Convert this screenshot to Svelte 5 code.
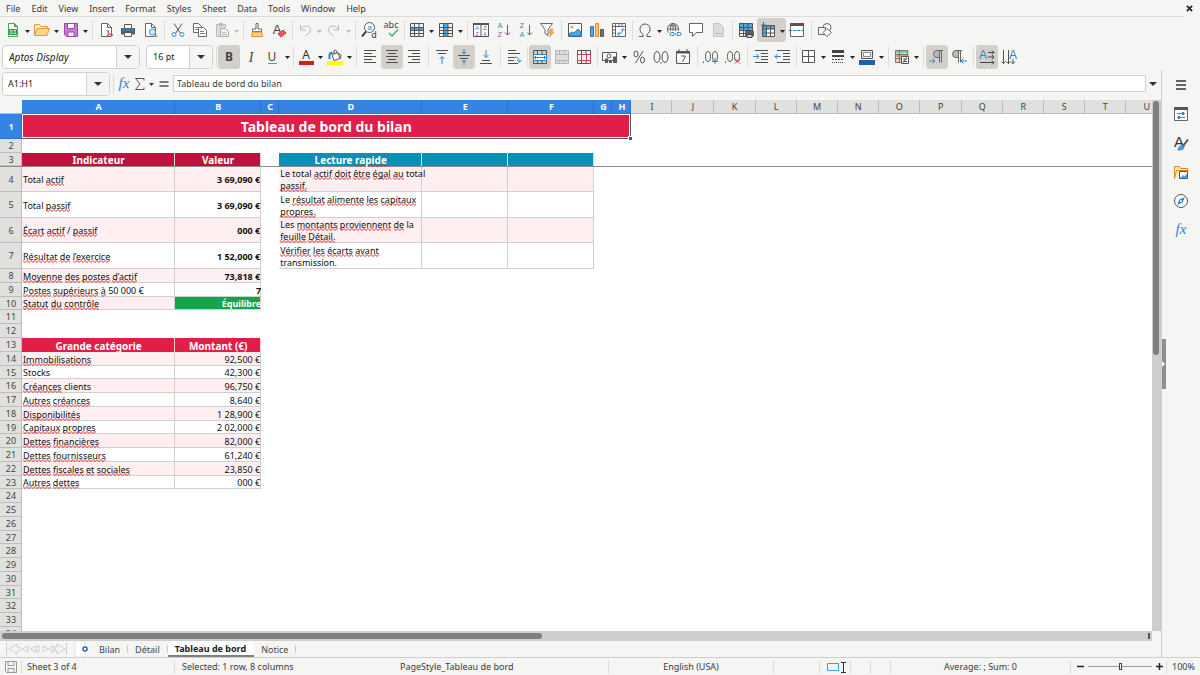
<script lang="ts">
  type Tool = { icon: string; label: string; menu?: boolean; on?: boolean; dim?: boolean };
  type Group = { tight?: boolean; tools: Tool[] };
  type Cell = { text?: string; kind?: string; span?: number };
  type Row = { n: number; height: number; cells: Cell[] };

  const menus = ['File', 'Edit', 'View', 'Insert', 'Format', 'Styles', 'Sheet', 'Data', 'Tools', 'Window', 'Help'];

  const page = '<path d="M3.5 1.5h6l4 4v9h-10z" fill="#fff" stroke="#666"/><path d="M9.5 1.5v4h4" fill="none" stroke="#666"/>';
  const grid = '<path d="M1.5 1.5h13v13h-13zM1.5 5.5h13M1.5 8.5h13M1.5 11.5h13M5.5 1.5v13M10 1.5v13" fill="none" stroke="#555"/>';
  const letter = (x: number, y: number, s: string, color: string, size = 7) =>
    `<text x="${x}" y="${y}" font-family="Liberation Sans" font-size="${size}" fill="${color}" text-anchor="middle">${s}</text>`;
  const downArrow = '<path d="M12.5 3v10M10 10.5l2.5 2.5 2.5-2.5" fill="none" stroke="#666"/>';
  const lines = (d: string) => `<path d="${d}" fill="none" stroke="#4d4d4d"/>`;
  const pilcrow = (x: number) =>
    `<path d="M${x + 4} 1.5H${x}a3 3 0 0 0 0 7h2z" fill="#bbb"/><path d="M${x + 6} 1.5H${x}a3 3 0 0 0 0 7h2M${x + 2}.5 1.5v12M${x + 4}.5 1.5v12" fill="none" stroke="#666"/>`;

  const icons: Record<string, string> = {
    new: '<path d="M3.5 1.5h6l3 3v10h-9z" fill="#fff" stroke="#43a45b"/><path d="M9.5 1.5v3h3z" fill="#43a45b" stroke="#43a45b"/><path d="M4.5 7.5h7v5h-7zM4.5 10h7M8 7.5v5" fill="#bfe5c8" stroke="#2d9a48"/>',
    open: '<path d="M.5 13.5v-11h5l1.5 2h6.5v2" fill="#fdebc8" stroke="#e39a3b"/><path d="M.5 13.5l2.5-7h12.5l-2.5 7z" fill="#fbd48b" stroke="#e39a3b"/>',
    save: '<path d="M1.5 1.5h13v13h-11l-2-2z" fill="#c77bd4" stroke="#9b45ad"/><path d="M4.5 1.5h7v5h-7z" fill="#fff" stroke="#9b45ad"/><path d="M5 10h6v4.5H5z" fill="#fff" stroke="#9b45ad"/>',
    pdf: page + '<path d="M8 15c3-3 3-5 2-7-1 3 2 5 5 5-3-1-5 0-7 2z" fill="#fbd3d3" stroke="#d64550"/>',
    print: '<path d="M4.5 6V2.5h7V6" fill="#fff" stroke="#555"/><path d="M1 6h14v6.5H1z" fill="#5b5f63"/><path d="M2 8h12" stroke="#3a8fc8"/><path d="M4.5 10.5h7v4h-7z" fill="#fff" stroke="#555"/>',
    preview: page + '<circle cx="10.5" cy="10" r="3" fill="#d6ebf8" stroke="#3f8fcb"/><path d="M12.5 12l3 3" stroke="#3f8fcb"/>',
    cut: '<path d="M4 1.5l6.5 10M12 1.5l-6.5 10" fill="none" stroke="#555"/><circle cx="4" cy="12.5" r="2" fill="none" stroke="#3f8fcb"/><circle cx="12" cy="12.5" r="2" fill="none" stroke="#3f8fcb"/>',
    copy: '<path d="M1.5 1.5h5l3 3v6h-8z" fill="#fff" stroke="#666"/><path d="M6.5 5.5h5l3 3v6h-8z" fill="#fff" stroke="#666"/><path d="M3 5.5h3M3 7.5h3M8 9.5h4M8 11.5h5" stroke="#3f8fcb"/>',
    paste: '<path d="M2.5 2.5h9v12h-9z" fill="#ddd" stroke="#bbb"/><path d="M5 1h4v3H5z" fill="#bbb"/><path d="M6.5 6.5h5l3 3v5h-8z" fill="#f2f2f2" stroke="#aaa"/><path d="M8 10.5h4M8 12.5h5" stroke="#bbb"/>',
    clone: '<path d="M7 1.5h2V7h3.5v2.5h-9V7H7z" fill="#fff" stroke="#666"/><path d="M3.5 10h9l1 4.5h-11z" fill="#fbd48b" stroke="#e08a2c"/>',
    clear: letter(6, 12, 'A', '#444', 13) + '<path d="M7 12l5-4 3 3-5 4z" fill="#ef5b62" stroke="#d33640"/>',
    undo: '<path d="M3.5 3v5h5M3.5 8c2-5 10-5.5 10 0 0 3-3 4-5 6" fill="none" stroke="#bbb"/>',
    redo: '<path d="M12.5 3v5h-5M12.5 8c-2-5-10-5.5-10 0 0 3 3 4 5 6" fill="none" stroke="#bbb"/>',
    find: '<circle cx="8.5" cy="5.5" r="5" fill="#fff" stroke="#555"/><path d="M1 14.5l4-5" stroke="#333" stroke-width="2"/>' + letter(8.5, 8, 'a', '#2d86c8', 8) + letter(13, 16, 'd', '#333', 9),
    spell: '<text x="8" y="6" font-family="Noto Sans" font-size="9" fill="#444" text-anchor="middle">abc</text><path d="M6 11l3 3 6-6.5" fill="none" stroke="#42b673" stroke-width="1.5"/>',
    row: '<rect x="1" y="5" width="14" height="4" fill="#4da6e4"/>' + grid,
    column: '<rect x="5" y="1" width="5" height="14" fill="#4da6e4"/>' + grid,
    sort: '<path d="M.5 1.5h15v13H.5zM8 1.5v13" fill="#fff" stroke="#555"/><path d="M0 2h16" stroke="#555" stroke-width="2"/>' + letter(4, 8, 'A', '#2d86c8', 6) + letter(4, 14, 'Z', '#a445b8', 5) + letter(12, 8, 'Z', '#a445b8', 6) + letter(12, 14, 'A', '#2d86c8', 5),
    asc: letter(5, 6, 'A', '#2d86c8') + letter(5, 15, 'Z', '#a445b8') + downArrow,
    desc: letter(5, 6, 'Z', '#a445b8') + letter(5, 15, 'A', '#2d86c8') + downArrow,
    filter: '<path d="M1.5 1.5h12L9 7.5v6l-3-2v-4z" fill="#fff" stroke="#666"/><path d="M11 7h3l-1 3h2l-4.5 5 1-4h-2z" fill="#f7a64a" stroke="#e08a2c" stroke-width=".5"/>',
    image: '<path d="M1.5 1.5h13v13h-13z" fill="#fff" stroke="#555"/><circle cx="5" cy="5" r="1.5" fill="#f5a623"/><path d="M2 14v-2l3-2 2 1 4-4 3 3v4z" fill="#4da6e4" stroke="#2d79b5"/>',
    chart: '<path d="M1.5 4.5h3v10h-3z" fill="#4da6e4" stroke="#2d79b5"/><path d="M6.5 1.5h3v13h-3z" fill="#fbc27d" stroke="#e08a2c"/><path d="M11.5 7.5h3v7h-3z" fill="#777" stroke="#555"/>',
    pivot: '<path d="M1.5 1.5h13v13h-13zM1.5 4.5h13M4.5 1.5v13M8 1.5v3M11 1.5v3M1.5 8h3M1.5 11h3" fill="#fff" stroke="#666"/><path d="M7 12c3 0 5-2 5-5M10 8.5l2-2 2 2M8.5 10L6.5 12l2 2" fill="none" stroke="#2d86c8"/>',
    omega: '<path d="M2 14.5h4v-2C1 9 2.5 2 8 2s7 7 2 10.5v2h4" fill="none" stroke="#555"/>',
    link: '<circle cx="7" cy="7" r="5.5" fill="#fff" stroke="#666"/><path d="M1.5 7h11M7 1.5v11M3 4h8M3 10h8" stroke="#666"/><ellipse cx="7" cy="7" rx="2.5" ry="5.5" fill="none" stroke="#666"/><rect x="3" y="9" width="13" height="6" fill="#f5f5f4"/><path d="M8 10.5H5.5a1.5 1.5 0 0 0 0 3H8M11 10.5h2.5a1.5 1.5 0 0 1 0 3H11M7 12h5" fill="none" stroke="#2d86c8"/>',
    comment: '<path d="M1.5 1.5h13v9H8l-3.5 4v-4h-3z" fill="#fff" stroke="#666"/>',
    headers: '<path d="M3.5 1.5h6l4 4v9h-10z" fill="#ddd" stroke="#c4c4c4"/><path d="M5 11.5h7" stroke="#bbb"/>',
    area: '<rect x="1" y="1" width="13" height="7" fill="#4da6e4"/>' + grid + '<rect x="7" y="9" width="9" height="5" fill="#5b5f63"/><path d="M9 12.5h5v3H9z" fill="#b8dcf5" stroke="#444"/>',
    freeze: '<path d="M2.5 3.5h12v11h-12z" fill="#fff"/><path d="M2 4h13v3H2zM2 4h4v11H2z" fill="#4da6e4"/><path d="M2.5 3.5h12v11h-12zM2.5 7h12M2.5 11h12M6.5 3.5v11M10.5 3.5v11" fill="none" stroke="#555"/><path d="M3.5 0v6M1 3h5" stroke="#1f74b8"/>',
    split: '<path d="M1.5 2.5h13v12h-13z" fill="#fff" stroke="#666"/><path d="M1 2.5h14" stroke="#555" stroke-width="3"/><path d="M0 8.5h16" stroke="#2d86c8" stroke-dasharray="3 1"/>',
    shapes: '<circle cx="10" cy="5.5" r="4" fill="#fff" stroke="#666"/><path d="M1.5 5.5h7v7h-7z" fill="#f5f5f4" stroke="#666"/><path d="M10 6.5l4.5 4-4.5 4-4-4z" fill="#fff" stroke="#666"/>',
    bold: '<text x="8" y="12" font-family="Noto Sans" font-size="12" font-weight="700" fill="#444" text-anchor="middle">B</text>',
    italic: '<text x="8" y="13" font-family="Liberation Serif" font-size="14" font-style="italic" fill="#444" text-anchor="middle">I</text>',
    underline: '<text x="7" y="12" font-family="Noto Sans" font-size="12" fill="#444" text-anchor="middle">U</text><path d="M3 14.5h9" stroke="#4d9ed8"/>',
    color: '<text x="8" y="10" font-family="Noto Sans" font-size="12" fill="#333" text-anchor="middle">A</text><rect x="1" y="12" width="15" height="4" fill="#c9211e"/>',
    highlight: '<path d="M5 5.5l6-2 2 6-6 2z" fill="#fff" stroke="#555"/><path d="M7 5V1.5c2-1 3 0 3 3M12 5c3 0 2 3 1 5" fill="none" stroke="#555"/><path d="M5.5 4c-4-1-3 4-3 6" fill="none" stroke="#2d86c8" stroke-width="2"/><rect x="0" y="12" width="16" height="4" fill="#ff0"/>',
    left: lines('M2 1.5h12M2 4.5h8M2 7.5h12M2 10.5h8M2 13.5h12'),
    center: lines('M2 1.5h12M4 4.5h8M2 7.5h12M4 10.5h8M2 13.5h12'),
    right: lines('M2 1.5h12M6 4.5h8M2 7.5h12M6 10.5h8M2 13.5h12'),
    top: lines('M2 1.5h12M4 4.5h8') + '<path d="M8 15V7.5M5.5 10L8 7.5l2.5 2.5" fill="none" stroke="#2d86c8"/>',
    middle: lines('M2 6.5h12M4 9.5h8') + '<path d="M8 0v5M6 3l2 2 2-2M8 16v-5M6 13l2-2 2 2" fill="none" stroke="#2d86c8"/>',
    bottom: lines('M4 11.5h8M2 14.5h12') + '<path d="M8 1v7.5M5.5 6L8 8.5l2.5-2.5" fill="none" stroke="#2d86c8"/>',
    wrap: lines('M2 1.5h8M2 4.5h12M2 8.5h6M2 11.5h6M2 14.5h10') + '<path d="M8 8.5c4-1 5 1 5.5 4M11 11l2.5 2.5 2-2.5" fill="none" stroke="#2d86c8"/>',
    mergecenter: grid + '<path d="M1.5 5.5h13v6h-13z" fill="#fff" stroke="#2d86c8"/><path d="M2 8.5h12M4 7L2.5 8.5 4 10M12 7l1.5 1.5L12 10" fill="none" stroke="#2d86c8"/>',
    merge: '<path d="M1.5 1.5h13v13h-13zM1.5 5.5h13M1.5 11.5h13M5.5 1.5v4M10.5 1.5v4M5.5 11.5v3M10.5 11.5v3" fill="#ddd" stroke="#b5b5b5"/>',
    unmerge: grid + '<path d="M1.5 5.5h13v6h-13zM5.5 5.5v6M10.5 5.5v6" fill="#fff" stroke="#d9414b"/>',
    currency: '<path d="M.5 3.5h14v8H.5z" fill="#fff" stroke="#555"/><circle cx="7" cy="7" r="2" fill="none" stroke="#555"/><path d="M3 9.5h3V14H3zM7 11h3v3H7zM11 7.5h4V14h-4z" fill="#5b5b5b"/>',
    percent: '<ellipse cx="5" cy="5" rx="2" ry="3" fill="none" stroke="#555"/><ellipse cx="11.5" cy="11" rx="2" ry="3" fill="none" stroke="#555"/><path d="M12 2L4.5 14" stroke="#555"/>',
    number: '<ellipse cx="4" cy="8" rx="3" ry="5.5" fill="none" stroke="#555"/><ellipse cx="12" cy="8" rx="3" ry="5.5" fill="none" stroke="#555"/><path d="M8 13v1.5" stroke="#555"/>',
    date: '<path d="M1.5 2.5h13v12h-13z" fill="#fff" stroke="#555"/><path d="M1 3.5h14" stroke="#555" stroke-width="2"/><path d="M4 0v3M12 0v3M6 7h4.5L7.5 13" fill="none" stroke="#555"/>',
    adddec: '<path d="M.5 12.5V14" stroke="#555"/><ellipse cx="5" cy="7.5" rx="2.5" ry="5" fill="none" stroke="#555"/><ellipse cx="12" cy="7.5" rx="2.5" ry="5" fill="none" stroke="#555"/><path d="M12 9v6M9 12.5h6" stroke="#2d86c8"/>',
    deldec: '<path d="M.5 12.5V14" stroke="#555"/><ellipse cx="5" cy="7.5" rx="2.5" ry="5" fill="none" stroke="#555"/><ellipse cx="12" cy="7.5" rx="2.5" ry="5" fill="none" stroke="#555"/><path d="M10 9.5l5 5M15 9.5l-5 5" stroke="#e0353f"/>',
    indent: lines('M2 1.5h13M8 4.5h7M8 7.5h7M8 10.5h7M2 13.5h13') + '<path d="M0 7.5h6M3.5 5L6 7.5 3.5 10" fill="none" stroke="#2d86c8"/>',
    outdent: lines('M2 1.5h13M8 4.5h7M8 7.5h7M8 10.5h7M2 13.5h13') + '<path d="M0 7.5h6M2.5 5L0 7.5 2.5 10" fill="none" stroke="#2d86c8"/>',
    borders: '<path d="M1.5 1.5h12v12h-12zM7.5 1.5v12M1.5 7.5h12" fill="#fff" stroke="#555"/>',
    border: '<path d="M2 2.5h12" stroke="#444" stroke-width="3"/><path d="M2 7h12" stroke="#444" stroke-width="2"/><path d="M2 10.5h12" stroke="#444" stroke-dasharray="2 1"/><path d="M2 13.5h12" stroke="#444" stroke-dasharray="1 1"/>',
    bordercolor: '<path d="M2.5 1.5h11v8h-11z" fill="#e8e8e8" stroke="#555"/><path d="M4.5 3.5h7v4h-7z" fill="#fff" stroke="#888"/><rect x="0" y="11" width="16" height="5" fill="#1e5fa8"/>',
    conditional: '<path d="M1.5 1.5h13v3h-13z" fill="#7fd19b"/><path d="M1.5 5h13v3h-13z" fill="#f08a80"/><path d="M1.5 8h6v6h-6z" fill="#fbd48b"/><path d="M1.5 1.5h12v12h-12zM1.5 5.5h12M1.5 9.5h12M5.5 1.5v12" fill="none" stroke="#777"/><path d="M7.5 7.5h7v7h-7z" fill="#fff" stroke="#555"/><path d="M9 10h4M9 12.5h4M12.5 8.5l-3 5" stroke="#555"/>',
    ltr: pilcrow(8) + '<path d="M0 12h6M3.5 9.5L6 12l-2.5 2.5" fill="none" stroke="#2d86c8"/>',
    rtl: pilcrow(5) + '<path d="M10 12h6M12.5 9.5L10 12l2.5 2.5" fill="none" stroke="#2d86c8"/>',
    horizontal: letter(4, 10, 'A', '#2d86c8', 12) + '<path d="M9 3.5h6M9 8h6M1 13.5h14M13 1.5l2 2-2 2M13 6l2 2-2 2M13 11.5l2 2-2 2" fill="none" stroke="#444"/>',
    vertical: letter(12, 10, 'A', '#2d86c8', 12) + '<path d="M2.5 1v14M7.5 1v14M.5 12.5l2 2 2-2M5.5 12.5l2 2 2-2M12 10v5M10 12.5l2 2 2-2" fill="none" stroke="#555"/>',
    hamburger: '<path d="M3 4h10M3 8h10M3 12h10" stroke="#333" stroke-width="1.5"/>',
    properties: '<path d="M1.5 2.5h13v12h-13z" fill="#fff" stroke="#666"/><path d="M1 2.5h14" stroke="#555" stroke-width="3"/><path d="M4 7.5h8M4 11.5h8" stroke="#777"/><path d="M10 6v3M6 10v3" stroke="#2d86c8" stroke-width="2"/>',
    styles: letter(6, 12, 'A', '#333', 15) + '<path d="M15 4.5l-4.5 6" stroke="#555" stroke-width="2"/><path d="M5 15c1-4 3-5 6-4 0 3-2 4-6 4z" fill="#4da6e4" stroke="#1f74b8"/>',
    gallery: '<path d="M1.5 14.5v-12h5l1 2h7v3" fill="#fdebc8" stroke="#e08a2c"/><path d="M1.5 14.5l2-8h12" fill="none" stroke="#e08a2c"/><path d="M6.5 7.5h8v7h-8z" fill="#fff" stroke="#555"/><path d="M7 14l3-3 1.5 1L14 10v4z" fill="#4da6e4"/>',
    navigator: '<circle cx="8" cy="8" r="6.5" fill="#fff" stroke="#555"/><path d="M12 4L9.5 9.5 4 12l2.5-5.5z" fill="#2d86c8"/><circle cx="8" cy="8" r="1" fill="#fff"/>',
    fx: '<text x="8" y="12" font-family="Liberation Serif" font-size="15" font-style="italic" fill="#2d86c8" text-anchor="middle">fx</text>',
    sigma: '<path d="M12 4.5v-2H3.5L8 8l-4.5 5.5H12v-2" fill="none" stroke="#555"/>',
    equals: '<path d="M4.5 6h9M4.5 10h9" stroke="#555" stroke-width="1.5"/>',
    disk: '<path d="M2.5 2.5h11v11h-10l-1-1zM5 2.5h6v4H5zM5 9.5h6v4H5z" fill="none" stroke="#999"/>',
    addsheet: '<path d="M1 0h10v16H1z" fill="#fff" stroke="#ccc" stroke-width=".5"/><circle cx="11" cy="8" r="2" fill="#fff" stroke="#2a63ad" stroke-width="1.5"/>',
    selection: '<path d="M.5 4.5h11v7H.5z" fill="none" stroke="#4a9bd1"/><path d="M14 3.5h5M14 13.5h5M16.5 3.5v10" stroke="#333"/>'
  };

  const standard: Group[] = [
    { tools: [{ icon: 'new', label: 'New', menu: true }, { icon: 'open', label: 'Open', menu: true }, { icon: 'save', label: 'Save', menu: true }] },
    { tools: [{ icon: 'pdf', label: 'Export as PDF' }, { icon: 'print', label: 'Print' }, { icon: 'preview', label: 'Print Preview' }] },
    { tools: [{ icon: 'cut', label: 'Cut' }, { icon: 'copy', label: 'Copy' }, { icon: 'paste', label: 'Paste', menu: true, dim: true }] },
    { tools: [{ icon: 'clone', label: 'Clone Formatting' }, { icon: 'clear', label: 'Clear Formatting' }] },
    { tight: true, tools: [{ icon: 'undo', label: 'Undo', menu: true, dim: true }, { icon: 'redo', label: 'Redo', menu: true, dim: true }] },
    { tools: [{ icon: 'find', label: 'Find and Replace' }, { icon: 'spell', label: 'Spelling' }] },
    { tight: true, tools: [{ icon: 'row', label: 'Row', menu: true }, { icon: 'column', label: 'Column', menu: true }] },
    { tools: [{ icon: 'sort', label: 'Sort' }, { icon: 'asc', label: 'Sort Ascending' }, { icon: 'desc', label: 'Sort Descending' }, { icon: 'filter', label: 'AutoFilter' }] },
    { tools: [{ icon: 'image', label: 'Insert Image' }, { icon: 'chart', label: 'Insert Chart' }, { icon: 'pivot', label: 'Pivot Table' }] },
    { tight: true, tools: [{ icon: 'omega', label: 'Special Character', menu: true }, { icon: 'link', label: 'Hyperlink' }, { icon: 'comment', label: 'Comment' }, { icon: 'headers', label: 'Headers and Footers', dim: true }] },
    { tools: [{ icon: 'area', label: 'Define Print Area' }, { icon: 'freeze', label: 'Freeze Rows and Columns', menu: true, on: true }, { icon: 'split', label: 'Split Window' }] },
    { tools: [{ icon: 'shapes', label: 'Draw Functions' }] }
  ];

  const formatting: Group[] = [
    { tools: [{ icon: 'bold', label: 'Bold', on: true }, { icon: 'italic', label: 'Italic' }, { icon: 'underline', label: 'Underline', menu: true }] },
    { tight: true, tools: [{ icon: 'color', label: 'Font Color', menu: true }, { icon: 'highlight', label: 'Background Color', menu: true }] },
    { tools: [{ icon: 'left', label: 'Align Left' }, { icon: 'center', label: 'Center Horizontally', on: true }, { icon: 'right', label: 'Align Right' }] },
    { tools: [{ icon: 'top', label: 'Align Top' }, { icon: 'middle', label: 'Center Vertically', on: true }, { icon: 'bottom', label: 'Align Bottom' }] },
    { tools: [{ icon: 'wrap', label: 'Wrap Text' }] },
    { tight: true, tools: [{ icon: 'mergecenter', label: 'Merge and Center', on: true }, { icon: 'merge', label: 'Merge Cells', dim: true }, { icon: 'unmerge', label: 'Unmerge Cells' }] },
    { tight: true, tools: [{ icon: 'currency', label: 'Currency', menu: true }, { icon: 'percent', label: 'Percent' }, { icon: 'number', label: 'Number' }, { icon: 'date', label: 'Date' }] },
    { tools: [{ icon: 'adddec', label: 'Add Decimal Place' }, { icon: 'deldec', label: 'Delete Decimal Place' }] },
    { tools: [{ icon: 'indent', label: 'Increase Indent' }, { icon: 'outdent', label: 'Decrease Indent' }] },
    { tight: true, tools: [{ icon: 'borders', label: 'Borders', menu: true }, { icon: 'border', label: 'Border Style', menu: true }, { icon: 'bordercolor', label: 'Border Color', menu: true }] },
    { tools: [{ icon: 'conditional', label: 'Conditional', menu: true }] },
    { tools: [{ icon: 'ltr', label: 'Left-To-Right', on: true }, { icon: 'rtl', label: 'Right-To-Left' }] },
    { tools: [{ icon: 'horizontal', label: 'Text direction from left to right', on: true }, { icon: 'vertical', label: 'Text direction from top to bottom' }] }
  ];

  const sidebar = [
    ['hamburger', 'Sidebar Settings'], ['properties', 'Properties'], ['styles', 'Styles'],
    ['gallery', 'Gallery'], ['navigator', 'Navigator'], ['fx', 'Functions']
  ];

  const columns = 'ABCDEFGHIJKLMNOPQRSTU'.split('');
  const widths = [153, 86, 18, 143, 86, 86, 18, 19, 41, 41, 42, 41, 41, 41, 41, 42, 41, 41, 41, 41, 42];

  // words between tildes carry the spell-check underline
  const notes = [
    'Le total ~actif~ ~doit~ ~être~ ~égal~ ~au~ total\n~passif.~',
    'Le ~résultat~ ~alimente~ ~les~ ~capitaux~\n~propres.~',
    'Les ~montants~ ~proviennent~ ~de~ la\n~feuille~ ~Détail.~',
    '~Vérifier~ ~les~ ~écarts~ ~avant~\ntransmission.'
  ];
  const indicators = [
    ['Total ~actif~', '3 69,090 €'],
    ['Total ~passif~', '3 69,090 €'],
    ['~Écart~ ~actif~ / ~passif~', '000 €'],
    ['~Résultat~ ~de~ ~l’exercice~', '1 52,000 €'],
    ['~Moyenne~ ~des~ ~postes~ ~d’actif~', '73,818 €'],
    ['~Postes~ ~supérieurs~ ~à~ 50 000 €', '7'],
    ['~Statut~ ~du~ ~contrôle~', 'Équilibre']
  ];
  const categories = [
    ['~Immobilisations~', '92,500 €'],
    ['Stocks', '42,300 €'],
    ['~Créances~ clients', '96,750 €'],
    ['~Autres~ ~créances~', '8,640 €'],
    ['~Disponibilités~', '1 28,900 €'],
    ['~Capitaux~ ~propres~', '2 02,000 €'],
    ['~Dettes~ ~financières~', '82,000 €'],
    ['~Dettes~ ~fournisseurs~', '61,240 €'],
    ['~Dettes~ ~fiscales~ ~et~ ~sociales~', '23,850 €'],
    ['~Autres~ ~dettes~', '000 €']
  ];

  function rowHeight(n: number) {
    if (n === 1) return 25;
    if (n >= 4 && n <= 7) return n % 2 ? 26 : 25;
    return n === 10 || (n > 13 && n % 4 === 3) ? 13 : 14;
  }

  function rowCells(n: number): Cell[] {
    if (n === 1) return [{ text: 'Tableau de bord du bilan', kind: 'title', span: 8 }, { span: 13 }];
    if (n === 3) {
      return [
        { text: 'Indicateur', kind: 'head crimson' }, { text: 'Valeur', kind: 'head crimson' }, {},
        { text: 'Lecture ~rapide~', kind: 'head teal' }, { kind: 'head teal' }, { kind: 'head teal' }, { span: 15 }
      ];
    }
    if (n >= 4 && n <= 10) {
      const [name, value] = indicators[n - 4];
      const tint = n % 2 ? '' : ' tint';
      const kind = n === 10 ? 'value ok' : n === 9 ? 'value strong flush' : 'value strong' + tint;
      const first = [{ text: name, kind: 'data' + tint }, { text: value, kind }];
      if (n > 7) return [...first, { span: 19 }];
      return [...first, {}, { text: notes[n - 4], kind: 'data' + tint }, { kind: 'data' + tint }, { kind: 'data' + tint }, { span: 15 }];
    }
    if (n === 13) return [{ text: 'Grande catégorie', kind: 'head rose' }, { text: 'Montant (€)', kind: 'head rose' }, { span: 19 }];
    if (n >= 14 && n <= 23) {
      const [name, value] = categories[n - 14];
      const tint = n % 2 ? '' : ' tint';
      return [{ text: name, kind: 'data' + tint }, { text: value, kind: 'value' + tint }, { span: 19 }];
    }
    return [{ span: 21 }];
  }

  const rows: Row[] = Array.from({ length: 34 }, (_, i) => ({ n: i + 1, height: rowHeight(i + 1), cells: rowCells(i + 1) }));

  const sheets = ['Bilan', 'Détail', 'Tableau de bord', 'Notice'];
  let active = $state('Tableau de bord');
  let formula = $state('Tableau de bord du bilan');
  let nameBox = $state('A1:H1');
  let zoom = $state(100);
</script>

{#snippet icon(name: string)}
  <svg class="icon" viewBox="0 0 16 16" aria-hidden="true">{@html icons[name]}</svg>
{/snippet}

{#snippet caret()}
  <svg class="caret" viewBox="0 0 5 3" aria-hidden="true"><path d="M0 0h5L2.5 3z" fill="currentColor" /></svg>
{/snippet}

{#snippet bigCaret()}
  <svg class="big-caret" viewBox="0 0 8 4" aria-hidden="true"><path d="M0 0h8L4 4z" /></svg>
{/snippet}

{#snippet groups(list: Group[])}
  {#each list as group, i}
    {#if i > 0}<span class="sep" class:tight={group.tight}></span>{/if}
    {#each group.tools as tool}
      <span class="tool" class:on={tool.on} class:dim={tool.dim}>
        <button class="main" aria-label={tool.label} aria-pressed={tool.on}>{@render icon(tool.icon)}</button>
        {#if tool.menu}
          <button class="drop" aria-label="{tool.label} options">{@render caret()}</button>
        {/if}
      </span>
    {/each}
  {/each}
{/snippet}

<div class="window">
  <nav class="menubar" aria-label="Menu">
    {#each menus as menu}
      <button>{menu}</button>
    {/each}
    <button class="close" aria-label="Close document">
      <svg viewBox="0 0 8 8" aria-hidden="true"><path d="M1 1l6 6M7 1L1 7" stroke="#222" stroke-width="2" /></svg>
    </button>
  </nav>

  <div class="toolbar standard" role="toolbar" aria-label="Standard">
    {@render groups(standard)}
  </div>

  <div class="toolbar" role="toolbar" aria-label="Formatting">
    <span class="combo font">
      <select aria-label="Font name"><option>Aptos Display</option></select>
      <span class="combo-arrow">{@render bigCaret()}</span>
    </span>
    <span class="combo size">
      <select aria-label="Font size"><option>16 pt</option></select>
      <span class="combo-arrow">{@render bigCaret()}</span>
    </span>
    <span class="sep tight"></span>
    {@render groups(formatting)}
  </div>

  <div class="body">
    <main>
      <div class="formula-bar">
        <span class="namebox">
          <input aria-label="Name box" bind:value={nameBox} />
          <button aria-label="Named ranges">{@render bigCaret()}</button>
        </span>
        <span class="sep"></span>
        <button class="fn" aria-label="Function Wizard">{@render icon('fx')}</button>
        <button class="fn" aria-label="Select Function">{@render icon('sigma')}</button>
        <button class="drop" aria-label="Function list">{@render caret()}</button>
        <button class="fn" aria-label="Formula">{@render icon('equals')}</button>
        <input class="formula" aria-label="Input line" bind:value={formula} />
        <button class="expand" aria-label="Expand formula bar">{@render bigCaret()}</button>
      </div>

      <div class="pane">
        <div class="viewport">
          <table>
            <colgroup>
              <col style:width="22px" />
              {#each widths as width}
                <col style:width="{width}px" />
              {/each}
            </colgroup>
            <thead>
              <tr>
                <td></td>
                {#each columns as column, i}
                  <th scope="col" class:selected={i < 8}>{column}</th>
                {/each}
              </tr>
            </thead>
            <tbody>
              {#each rows as row (row.n)}
                <tr class:frozen={row.n === 3} style:height="{row.height}px">
                  <th scope="row" class:selected={row.n === 1}>{row.n}</th>
                  {#each row.cells as cell}
                    <td class={cell.kind} colspan={cell.span}>
                      {#if cell.text}
                        <span class="text">{#each cell.text.split('~') as part, i}{#if i % 2}<span class="typo">{part}</span>{:else}{part}{/if}{/each}</span>
                      {/if}
                      {#if cell.kind === 'title'}<span class="handle"></span>{/if}
                    </td>
                  {/each}
                </tr>
              {/each}
            </tbody>
          </table>
        </div>
        <div class="vscroll"><div class="thumb"></div></div>
      </div>

      <div class="hscroll">
        <div class="track"><div class="thumb"></div><span class="notch"></span></div>
      </div>

      <div class="tabs">
        <svg class="tab-nav" viewBox="0 0 62 14" aria-hidden="true">
          <path d="M1.5 1v12M12 2L4 7l8 5V9h3V5h-3zM23 4l-6 3 6 3zM31 4l-6 3 6 3V4zM38 4l6 3-6 3zM31 4h3v6h-3M46 4h3v6h-3zM50 5h2V2l8 5-8 5V9h-2zM61.5 1v12" fill="none" stroke="#d0cfcc" />
        </svg>
        <button class="add" aria-label="Add sheet">{@render icon('addsheet')}</button>
        {#each sheets as sheet}
          <button class="tab" class:active={sheet === active} onclick={() => (active = sheet)}>{sheet}</button>
        {/each}
      </div>
    </main>

    <aside aria-label="Sidebar">
      {#each sidebar as [name, label]}
        <button aria-label={label}>{@render icon(name)}</button>
      {/each}
      <span class="grip"><svg viewBox="0 0 3 6" aria-hidden="true"><path d="M0 0l3 3-3 3z" fill="#fff" /></svg></span>
    </aside>
  </div>

  <footer>
    <span class="mid">{@render icon('disk')}</span>
    <span>Sheet 3 of 4</span>
    <span class="indent">Selected: 1 row, 8 columns</span>
    <span class="indent">PageStyle_Tableau de bord</span>
    <span class="mid">English (USA)</span>
    <span></span>
    <span class="indent">{@render icon('selection')}</span>
    <span></span>
    <span></span>
    <span class="mid">Average: ; Sum: 0</span>
    <span class="zoom">
      <button aria-label="Zoom out" onclick={() => (zoom -= 5)}><svg viewBox="0 0 7 7" aria-hidden="true"><path d="M0 3.5h7" stroke="#222" stroke-width="1.5" /></svg></button>
      <input type="range" aria-label="Zoom" min="20" max="180" bind:value={zoom} />
      <button aria-label="Zoom in" onclick={() => (zoom += 5)}><svg viewBox="0 0 7 7" aria-hidden="true"><path d="M0 3.5h7M3.5 0v7" stroke="#222" stroke-width="1.5" /></svg></button>
    </span>
    <span class="mid">{zoom}%</span>
  </footer>
</div>

<style>
  :global(body) {
    margin: 0;
  }

  .window {
    display: flex;
    flex-direction: column;
    height: 100vh;
    overflow: hidden;
    background: #f5f5f4;
    color: #3a3a3a;
    font-family: 'Noto Sans', sans-serif;
    font-size: 9px;
  }

  .window * {
    box-sizing: border-box;
  }

  button,
  input,
  select {
    margin: 0;
    padding: 0;
    border: none;
    background: none;
    color: inherit;
    font: inherit;
  }

  .icon {
    flex: none;
    width: 16px;
    height: 16px;
    overflow: visible;
  }

  .caret {
    width: 5px;
    height: 3px;
  }

  .big-caret {
    width: 8px;
    height: 4px;
    fill: #333;
  }

  .menubar {
    display: flex;
    flex: none;
    height: 17px;
    margin-right: 16px;
    border-bottom: 1px solid #dddcda;
  }

  .menubar button {
    padding: 0 5px 0 6px;
  }

  .menubar .close {
    width: 22px;
    margin: 0 -16px 0 auto;
    padding: 0 7px;
  }

  .close svg {
    width: 7px;
    height: 7px;
  }

  .toolbar {
    display: flex;
    flex: none;
    align-items: center;
    height: 27px;
    padding-left: 2px;
  }

  .standard {
    height: 26px;
  }

  .sep {
    flex: none;
    width: 6px;
    height: 20px;
    background: linear-gradient(#dedddb, #dedddb) center / 1px 100% no-repeat;
  }

  .sep.tight {
    width: 4px;
  }

  .tool {
    display: flex;
    flex: none;
    height: 24px;
    border-radius: 3px;
    color: #222;
  }

  .tool.on {
    background: #d3d0cc;
  }

  .tool.dim {
    color: #bbb;
  }

  .main {
    display: flex;
    align-items: center;
    justify-content: center;
    width: 22px;
  }

  .drop {
    display: flex;
    align-items: center;
    justify-content: center;
    width: 7px;
    padding-top: 2px;
  }

  .combo,
  .namebox {
    position: relative;
    display: flex;
    flex: none;
    height: 24px;
    overflow: hidden;
    border: 1px solid #d2d0cd;
    border-radius: 4px;
    background: #fff;
  }

  .combo {
    margin-right: 6px;
  }

  .combo select {
    flex: 1;
    appearance: none;
    padding-left: 6px;
    color: #222;
    font-size: 9px;
  }

  .combo.font {
    width: 138px;
  }

  .combo.font select {
    font-size: 10px;
    font-style: italic;
  }

  .combo.size {
    width: 67px;
    margin-right: 1px;
  }

  .combo-arrow {
    position: absolute;
    inset: 0 0 0 auto;
    display: flex;
    align-items: center;
    justify-content: center;
    width: 23px;
    border-left: 1px solid #d2d0cd;
    background: #f5f5f4;
    pointer-events: none;
  }

  .body {
    display: flex;
    flex: 1;
    min-height: 0;
  }

  main {
    display: flex;
    flex: 1;
    flex-direction: column;
    min-width: 0;
  }

  .formula-bar {
    display: flex;
    flex: none;
    align-items: center;
    height: 27px;
    margin-bottom: 3px;
    padding-left: 2px;
  }

  .namebox {
    width: 108px;
  }

  .namebox input {
    flex: 1;
    min-width: 0;
    padding-left: 5px;
    color: #222;
  }

  .namebox button {
    width: 23px;
    border-left: 1px solid #d2d0cd;
    background: #f5f5f4;
  }

  .namebox button,
  .expand {
    display: flex;
    align-items: center;
    justify-content: center;
  }

  .fn {
    width: 16px;
    height: 16px;
  }

  .formula {
    flex: 1;
    height: 17px;
    margin-left: 2px;
    padding: 0 3px;
    border: 1px solid #d2d0cd;
    background: #fff;
  }

  .expand {
    width: 13px;
    height: 16px;
    margin-right: 2px;
  }

  .pane {
    display: flex;
    flex: 1;
    min-height: 0;
  }

  .viewport {
    flex: 1;
    min-width: 0;
    overflow: hidden;
    background: #fff;
  }

  table {
    width: 1168px;
    table-layout: fixed;
    border-collapse: separate;
    border-spacing: 0;
    line-height: 12px;
    color: #111;
  }

  thead tr {
    height: 14px;
  }

  td {
    padding: 1px 1px 0;
    white-space: nowrap;
  }

  thead td {
    border-bottom: 1px solid #bdbdbb;
    background: #f5f5f4;
  }

  th {
    padding: 0;
    background: #e0e0df;
    box-shadow: inset -1px -1px #bdbdbb;
    color: #444;
    font-weight: 400;
    text-align: center;
  }

  th.selected {
    background: #3584e4;
    box-shadow: inset -1px -1px #2c72c7;
    color: #fff;
    font-weight: 700;
  }

  .text {
    white-space: pre;
  }

  .title {
    position: relative;
    padding-top: 2px;
    border-right: 1px solid #555;
    border-bottom: 1px solid #555;
    background: #e11d48;
    box-shadow: inset 0 0 0 1px #fff;
    color: #fff;
    font-size: 14px;
    font-weight: 700;
    text-align: center;
  }

  .handle {
    position: absolute;
    right: -2px;
    bottom: -2px;
    width: 4px;
    height: 4px;
    border: 1px solid #fff;
    border-width: 1px 0 0 1px;
    background: #555;
  }

  .head {
    padding-top: 1px;
    box-shadow: inset -1px 0 #e8d5da;
    color: #fff;
    font-size: 10px;
    font-weight: 700;
    text-align: center;
  }

  .crimson {
    background: #be123c;
  }

  .rose {
    background: #e11d48;
  }

  .teal {
    background: #0891b2;
  }

  .frozen td,
  .frozen th {
    border-bottom: 1px solid #8c8c8c;
  }

  .data,
  .value {
    box-shadow: inset -1px -1px #cdd0d2;
  }

  .value {
    text-align: right;
  }

  .tint {
    background: #ffeff1;
  }

  .strong,
  .ok {
    font-weight: 700;
  }

  .flush,
  .ok {
    padding-right: 0;
  }

  .ok {
    background: #16a34a;
    color: #fff;
  }

  .typo {
    background: url("data:image/svg+xml,%3Csvg xmlns='http://www.w3.org/2000/svg' width='4' height='3'%3E%3Cpath d='M0 .5C1 .5 1 2.500 2 2.500S3 .5 4 .5' fill='none' stroke='%23e02a2a' stroke-width='.9'/%3E%3C/svg%3E") left bottom / 4px 3px repeat-x;
  }

  .vscroll {
    width: 9px;
    padding: 1px 2px 0 1px;
    background: #cdcdcd;
  }

  .thumb {
    border-radius: 3px;
    background: #7f807e;
  }

  .vscroll .thumb {
    height: 48%;
  }

  .hscroll {
    flex: none;
    height: 10px;
    padding-right: 9px;
  }

  .track {
    display: flex;
    align-items: center;
    justify-content: space-between;
    height: 10px;
    padding: 0 2px;
    background: #cdcdcd;
  }

  .track .thumb {
    width: 47%;
    height: 6px;
  }

  .notch {
    width: 2px;
    height: 6px;
    background: #555;
  }

  .tabs {
    display: flex;
    flex: none;
    align-items: center;
    height: 16px;
    padding-left: 5px;
  }

  .tab-nav {
    width: 62px;
    height: 14px;
    margin-right: 7px;
  }

  .add {
    width: 16px;
    height: 16px;
    margin-right: 2px;
  }

  .tab {
    position: relative;
    height: 16px;
    padding: 0 8px 0 7px;
    color: #444;
  }

  .tab::after {
    position: absolute;
    inset: 4px 0 4px auto;
    width: 1px;
    background: #ccc;
    content: '';
  }

  .tab.active {
    border-bottom: 2px solid #7f807e;
    background: #fff;
    color: #222;
    font-weight: 700;
  }

  .tab.active::after {
    display: none;
  }

  aside {
    position: relative;
    display: flex;
    flex: none;
    flex-direction: column;
    align-items: center;
    gap: 13px;
    width: 39px;
    padding-top: 7px;
    border-left: 1px solid #cfcecc;
  }

  aside button {
    width: 16px;
    height: 16px;
  }

  .grip {
    position: absolute;
    top: 50%;
    left: 0;
    display: flex;
    align-items: center;
    width: 4px;
    height: 50px;
    margin-top: -25px;
    background: #8e8f8e;
  }

  .grip svg {
    width: 3px;
    height: 6px;
  }

  footer {
    display: grid;
    flex: none;
    grid-template-columns: 22px 153fr 218fr 216fr 165fr 46fr 31px 20px 20px 180fr 96px 33px;
    align-items: center;
    height: 18px;
    border-top: 1px solid #cfcecc;
  }

  footer > span {
    display: flex;
    align-items: center;
    height: 13px;
    padding-left: 5px;
    border-right: 1px solid #dddcda;
    white-space: nowrap;
  }

  footer > span:last-child,
  footer > span:nth-child(3) {
    border-right: none;
  }

  footer .mid {
    justify-content: center;
    padding: 0;
  }

  footer .indent {
    padding-left: 7px;
  }

  .zoom {
    gap: 3px;
  }

  .zoom button {
    display: flex;
    flex: none;
    align-items: center;
    justify-content: center;
    width: 9px;
    height: 9px;
  }

  .zoom svg {
    width: 7px;
    height: 7px;
  }

  .zoom input {
    flex: none;
    width: 64px;
    height: 9px;
    appearance: none;
    background: linear-gradient(#999, #999) center / 100% 1px no-repeat;
  }

  .zoom input::-webkit-slider-thumb {
    width: 3px;
    height: 7px;
    appearance: none;
    border: 1px solid #444;
    background: #f5f5f4;
  }
</style>
